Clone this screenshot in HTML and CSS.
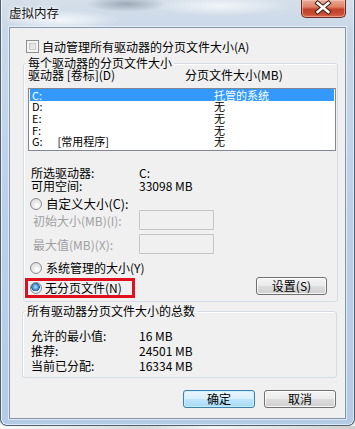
FILE: index.html
```html
<!DOCTYPE html>
<html lang="zh-CN">
<head>
<meta charset="utf-8">
<title>虚拟内存</title>
<link rel="stylesheet" href="styles.css">
</head>
<body>
<div class="window">
  <div class="titlebar">
    <span class="title">虚拟内存</span>
    <div class="close">
      <svg width="45" height="17" viewBox="0 0 45 17">
        <path d="M17 4 L28 13 M28 4 L17 13" stroke="#3b1d14" stroke-width="4.6" stroke-linecap="square"/>
        <path d="M17 4 L28 13 M28 4 L17 13" stroke="#ffffff" stroke-width="2.6" stroke-linecap="square"/>
      </svg>
    </div>
  </div>
  <div class="client">
    <div class="auto-row">
      <span class="checkbox"></span>
      <span>自动管理所有驱动器的分页文件大小(A)</span>
    </div>

    <fieldset class="group group1">
      <legend>每个驱动器的分页文件大小</legend>
      <div class="list-head">
        <span class="col1">驱动器 [卷标](D)</span>
        <span>分页文件大小(MB)</span>
      </div>
      <div class="listbox">
        <div class="lrow selected"><span class="lcol1">C:</span><span>托管的系统</span></div>
        <div class="lrow"><span class="lcol1">D:</span><span>无</span></div>
        <div class="lrow"><span class="lcol1">E:</span><span>无</span></div>
        <div class="lrow"><span class="lcol1">F:</span><span>无</span></div>
        <div class="lrow"><span class="lcol1">G:&nbsp;&nbsp;&nbsp;&nbsp;&nbsp;&nbsp;[常用程序]</span><span>无</span></div>
      </div>
      <div class="info info-first">
        <span class="ilabel">所选驱动器:</span><span>C:</span>
      </div>
      <div class="info">
        <span class="ilabel">可用空间:</span><span>33098 MB</span>
      </div>
      <div class="radio-row custom">
        <span class="radio"></span><span class="rtext">自定义大小(C):</span>
      </div>
      <div class="size-row first">
        <span class="slabel">初始大小(MB)(I):</span><span class="textbox"></span>
      </div>
      <div class="size-row">
        <span class="slabel">最大值(MB)(X):</span><span class="textbox"></span>
      </div>
      <div class="radio-row system">
        <span class="radio"></span><span class="rtext">系统管理的大小(Y)</span>
      </div>
      <div class="nopage-row">
        <div class="redbox">
          <span class="radio checked"></span><span class="rtext">无分页文件(N)</span>
        </div>
        <button class="btn set-btn">设置(S)</button>
      </div>
    </fieldset>

    <fieldset class="group group2">
      <legend>所有驱动器分页文件大小的总数</legend>
      <div class="total first"><span class="tlabel">允许的最小值:</span><span>16 MB</span></div>
      <div class="total"><span class="tlabel">推荐:</span><span>24501 MB</span></div>
      <div class="total"><span class="tlabel">当前已分配:</span><span>16334 MB</span></div>
    </fieldset>

    <div class="actions">
      <button class="btn default">确定</button>
      <button class="btn">取消</button>
    </div>
  </div>
</div>
<div class="below"></div>
</body>
</html>
```

FILE: styles.css
```css
* { box-sizing: border-box; }
html, body {
  margin: 0;
  padding: 0;
}
body {
  width: 355px;
  height: 429px;
  overflow: hidden;
  background: #eef0f2;
  font-family: "Noto Sans CJK SC", "Noto Sans", sans-serif;
  font-size: 12px;
  color: #000;
}

.window {
  width: 355px;
  height: 426px;
  padding: 0 8px;
  display: flex;
  flex-direction: column;
  border: 1px solid #4d5f75;
  border-top: none;
  border-radius: 0 0 7px 7px;
  background:
    radial-gradient(ellipse 40px 8px at 125px 4px, rgba(110,125,140,0.55), transparent),
    radial-gradient(ellipse 60px 10px at 60px 20px, rgba(255,255,255,0.8), transparent),
    radial-gradient(ellipse 70px 10px at 220px 6px, rgba(255,255,255,0.7), transparent),
    linear-gradient(180deg, #d5dfe9 0px, #c9d8e8 30px, #bcd1e8 200px, #b4cbe4 426px);
  box-shadow: inset 1px 0 0 rgba(255,255,255,0.7), inset -1px 0 0 rgba(255,255,255,0.5), inset 0 -1px 0 rgba(255,255,255,0.6);
}

.titlebar {
  height: 27px;
  display: flex;
  align-items: flex-start;
  flex: none;
}
.title {
  margin-top: 5px;
  line-height: 15px;
  font-size: 12.5px;
  color: #111;
  text-shadow: 0 0 6px rgba(255,255,255,0.95), 0 0 3px #fff;
}
.close {
  margin-left: auto;
  margin-right: 0;
  width: 45px;
  height: 18px;
  border: 1px solid #6d2a1d;
  border-top: none;
  border-radius: 0 0 5px 5px;
  background: linear-gradient(180deg, #e9a995 0%, #de8367 40%, #c3412a 55%, #c84b33 80%, #d9694e 100%);
  box-shadow: inset 0 0 0 1px rgba(255,220,210,0.45);
  display: flex;
}
.close svg { display: block; margin-top: -1px; margin-left: -1px; }

.client {
  flex: none;
  height: 392px;
  background: #f0f0f0;
  border: 1px solid #8496ae;
  box-shadow: 0 0 0 1px rgba(255,255,255,0.55);
  display: flex;
  flex-direction: column;
}

.auto-row {
  margin-top: 12px;
  margin-left: 16px;
  height: 13px;
  display: flex;
  align-items: center;
  gap: 3px;
  line-height: 13px;
}
.checkbox {
  width: 13px;
  height: 13px;
  border: 1px solid #8f8f8f;
  background: linear-gradient(135deg, #d8d8d8, #f4f4f4);
  box-shadow: inset 0 0 0 2px #f4f4f4, inset 0 0 0 3px #c8c8c8;
  flex: none;
}

.group {
  margin: 0;
  border: 1px solid #d5dce3;
  border-radius: 3px;
  padding: 0;
  min-width: 0;
  box-shadow: inset 1px 1px 0 #fff;
}
.group legend {
  padding: 0 2px;
  margin-left: 2px;
  line-height: 12px;
  height: 12px;
}
.group1 {
  margin-top: 4px;
  margin-left: 13px;
  width: 315px;
  padding-bottom: 3px;
}
.list-head {
  display: flex;
  margin-left: 4px;
  height: 12px;
  line-height: 12px;
}
.list-head .col1 { width: 157px; }

.listbox {
  margin-top: 7px;
  margin-left: 4px;
  width: 308px;
  height: 63px;
  border: 1px solid #828790;
  background: #fff;
  padding: 0 1px;
}
.lrow {
  display: flex;
  align-items: center;
  height: 11.7px;
  line-height: 11px;
  padding-left: 2px;
  font-size: 11px;
}
.lrow .lcol1 { width: 182px; }
.lrow.selected {
  background: #3399ff;
  color: #fff;
  height: 12px;
}

.info {
  display: flex;
  margin-left: 7px;
  height: 13px;
  line-height: 13px;
}
.info-first { margin-top: 15px; }
.ilabel { width: 108px; }

.radio-row {
  display: flex;
  align-items: center;
  margin-left: 6px;
  height: 12px;
  line-height: 12px;
}
.radio-row .rtext { margin-left: 4px; }
.custom { margin-top: 6px; font-size: 12.5px; }
.system { margin-top: 8px; }

.radio {
  width: 12px;
  height: 12px;
  border-radius: 50%;
  border: 1px solid #8c8c8c;
  background: radial-gradient(circle at 60% 65%, #ffffff 0%, #e6e6e6 55%, #cfcfcf 100%);
  flex: none;
}
.radio.checked {
  background:
    radial-gradient(circle at 45% 40%, #bfe3fa 0px, #3f8fd0 3px, #1c5c9c 4px, transparent 4.5px),
    radial-gradient(circle at 60% 65%, #ffffff 0%, #e6e6e6 55%, #cfcfcf 100%);
}

.size-row {
  display: flex;
  align-items: center;
  height: 20px;
  margin-left: 9px;
  margin-top: 4px;
  color: #a0a0a0;
}
.size-row.first { margin-top: 0; }
.slabel { width: 106px; }
.textbox {
  width: 75px;
  height: 20px;
  border: 1px solid #c5c5c5;
  background: #f0f0f0;
  border-radius: 1px;
}

.nopage-row {
  display: flex;
  align-items: flex-start;
  margin-top: 3px;
  height: 21px;
}
.redbox {
  margin-top: 1px;
  margin-left: 1px;
  width: 110px;
  height: 20px;
  border: 3px solid #e0101e;
  display: flex;
  align-items: center;
  padding-left: 2px;
  line-height: 12px;
}
.redbox .rtext { margin-left: 3px; }

.btn {
  font-family: "Noto Sans CJK SC", "Noto Sans", sans-serif;
  font-size: 12px;
  color: #000;
  height: 18px;
  line-height: 14px;
  padding: 0;
  border: 1px solid #707070;
  border-radius: 3px;
  background: linear-gradient(180deg, #f4f4f4 0%, #ebebeb 48%, #dddddd 52%, #cfcfcf 100%);
  box-shadow: inset 0 0 0 1px rgba(255,255,255,0.8);
}
.set-btn {
  margin-left: 121px;
  width: 71px;
}

.group2 {
  margin-top: 3px;
  margin-left: 12px;
  width: 315px;
  padding-bottom: 4px;
}
.total {
  display: flex;
  margin-left: 8px;
  height: 15px;
  line-height: 15px;
}
.total.first { margin-top: 11px; }
.tlabel { width: 108px; }

.actions {
  display: flex;
  justify-content: flex-end;
  gap: 9px;
  margin-top: 12px;
  margin-right: 9px;
}
.actions .btn { width: 72px; }
.btn.default {
  border-color: #3c7fb1;
  background: linear-gradient(180deg, #eaf6fd 0%, #d9f0fc 48%, #bee6fd 52%, #a7d9f5 100%);
  box-shadow: inset 0 0 0 1px rgba(200,240,255,0.9);
}

.below {
  height: 3px;
  background: linear-gradient(90deg, #fafafa, #d8d8d8 40%, #f4f4f4 60%, #cfcfcf);
}
```
